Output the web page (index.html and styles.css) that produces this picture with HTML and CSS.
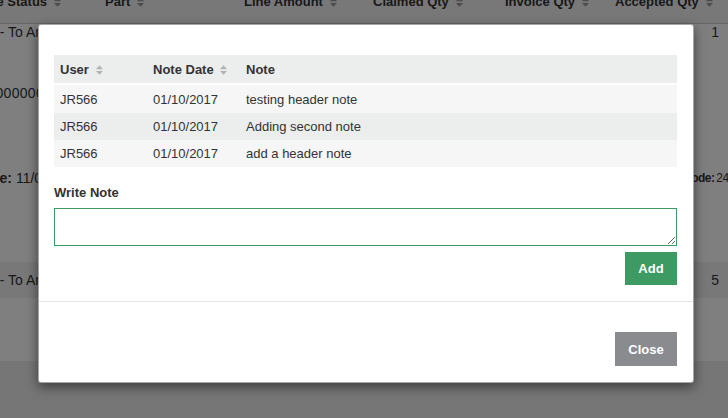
FILE: index.html
```html
<!DOCTYPE html>
<html>
<head>
<meta charset="utf-8">
<link rel="stylesheet" href="styles.css">
</head>
<body>
<div class="page">
  <div class="grid-head">
    <div class="hc c1">Line Status <svg class="sort" viewBox="0 0 8 11"><path d="M4 0L8 4.5H0z M0 6.5H8L4 11z"/></svg></div>
    <div class="hc c2">Part <svg class="sort" viewBox="0 0 8 11"><path d="M4 0L8 4.5H0z M0 6.5H8L4 11z"/></svg></div>
    <div class="hc c3">Line Amount <svg class="sort" viewBox="0 0 8 11"><path d="M4 0L8 4.5H0z M0 6.5H8L4 11z"/></svg></div>
    <div class="hc c4">Claimed Qty <svg class="sort" viewBox="0 0 8 11"><path d="M4 0L8 4.5H0z M0 6.5H8L4 11z"/></svg></div>
    <div class="hc c5">Invoice Qty <svg class="sort" viewBox="0 0 8 11"><path d="M4 0L8 4.5H0z M0 6.5H8L4 11z"/></svg></div>
    <div class="hc c6">Accepted Qty <svg class="sort" viewBox="0 0 8 11"><path d="M4 0L8 4.5H0z M0 6.5H8L4 11z"/></svg></div>
  </div>
  <div class="grow r1">
    <div class="left">1 - To Arrive</div>
    <div class="right">1</div>
  </div>
  <div class="detail">
    <div class="d-row d1"><span class="num">1000000000000</span></div>
    <div class="d-row d2"><span class="left"><b>Date:</b> 11/05/2017</span><span class="right-det"><b>Code:</b> 24</span></div>
  </div>
  <div class="grow r2 striped">
    <div class="left">1 - To Arrive</div>
    <div class="right">5</div>
  </div>
</div>
<div class="backdrop"></div>
<div class="modal">
  <div class="modal-header"></div>
  <div class="modal-body">
    <table class="notes">
      <thead>
        <tr>
          <th class="w1">User <svg class="sort lite" viewBox="0 0 8 11"><path d="M4 0L8 4.5H0z M0 6.5H8L4 11z"/></svg></th>
          <th class="w2">Note Date <svg class="sort lite" viewBox="0 0 8 11"><path d="M4 0L8 4.5H0z M0 6.5H8L4 11z"/></svg></th>
          <th>Note</th>
        </tr>
      </thead>
      <tbody>
        <tr class="first"><td>JR566</td><td>01/10/2017</td><td>testing header note</td></tr>
        <tr><td>JR566</td><td>01/10/2017</td><td>Adding second note</td></tr>
        <tr><td>JR566</td><td>01/10/2017</td><td>add a header note</td></tr>
      </tbody>
    </table>
    <label class="lbl">Write Note</label>
    <textarea class="note-input"></textarea>
    <div class="actions">
      <button class="btn btn-add">Add</button>
    </div>
  </div>
  <div class="modal-footer">
    <button class="btn btn-close">Close</button>
  </div>
</div>
</body>
</html>
```
FILE: styles.css
```css
html, body {
  margin: 0;
  padding: 0;
}
body {
  width: 728px;
  height: 418px;
  overflow: hidden;
  background: #ececec;
  font-family: "Liberation Sans", Arial, sans-serif;
  font-size: 13px;
  color: #333;
  position: relative;
}
.page {
  background: #fff;
  height: 361px;
  margin-left: -23px;
  width: 760px;
  overflow: hidden;
}
.grid-head {
  display: flex;
  height: 23px;
  border-bottom: 1px solid #ccc;
  background: #f0f0f0;
  font-weight: bold;
  color: #333;
  font-size: 13px;
  line-height: 16px;
  align-items: flex-start;
}
.hc {
  display: flex;
  align-items: center;
  gap: 7px;
  margin-top: -6px;
}
.c1 { width: 128px; }
.c2 { width: 139px; }
.c3 { width: 129px; }
.c4 { width: 132px; }
.c5 { width: 110px; }
.c6 { width: 120px; }
.sort {
  width: 7px;
  height: 10px;
  fill: #999;
  flex: none;
}
.grow {
  display: flex;
  justify-content: space-between;
  align-items: center;
  font-size: 14px;
  color: #333;
  padding-right: 18px;
}
.r1 {
  height: 16px;
}
.grow .left { padding-left: 11px; }
.detail {
  height: 222px;
}
.d-row {
  display: flex;
  font-size: 14px;
  white-space: nowrap;
}
.d1 { padding-top: 45px; }
.d1 .num { margin-left: -30px; letter-spacing: 0.3px; }
.d2 {
  padding-top: 69px;
  display: grid;
  grid-template-columns: 706px 60px;
}
.right-det {
  font-size: 12px;
  letter-spacing: -0.5px;
  word-spacing: -1px;
  padding-top: 1px;
}
.backdrop {
  position: absolute;
  inset: 0;
  background: rgba(0, 0, 0, 0.5);
}
.striped {
  background: #f0f0f0;
  height: 36px;
}
.modal {
  position: absolute;
  left: 38px;
  top: 24px;
  width: 654px;
  height: 357px;
  background: #fff;
  border: 1px solid rgba(0, 0, 0, 0.35);
  border-radius: 3px;
  box-shadow: 0 4px 12px rgba(0, 0, 0, 0.5);
  display: flex;
  flex-direction: column;
}
.modal-header {
  height: 14px;
}
.modal-body {
  padding: 16px 16px 16px 15px;
  display: flex;
  flex-direction: column;
  border-bottom: 1px solid #e5e5e5;
}
.notes {
  width: 623px;
  border-collapse: collapse;
}
.notes th {
  background: #eceeed;
  text-align: left;
  font-weight: bold;
  height: 28px;
  padding: 0 6px;
  border-bottom: 2px solid #fff;
  color: #333;
}
.notes td {
  height: 27px;
  padding: 0 6px;
  color: #333;
}
.notes tr.first td { height: 28px; }
.notes tbody tr:nth-child(odd) td { background: #f6f6f6; }
.notes tbody tr:nth-child(even) td { background: #eceeed; }
.w1 { width: 81px; }
.w2 { width: 81px; }
.sort.lite {
  fill: #b3b3b3;
  margin-left: 3px;
  vertical-align: -1px;
}
.lbl {
  font-weight: bold;
  margin-top: 18px;
  line-height: 15px;
  color: #333;
}
.note-input {
  margin-top: 8px;
  width: 623px;
  height: 38px;
  box-sizing: border-box;
  border: 1px solid #3d9a62;
  border-radius: 0;
  padding: 4px;
  font-family: inherit;
  resize: vertical;
  outline: none;
}
.actions {
  display: flex;
  justify-content: flex-end;
  margin-top: 6px;
  width: 623px;
}
.btn {
  border: none;
  border-radius: 0;
  color: #fff;
  font-family: "Liberation Sans", Arial, sans-serif;
  font-weight: bold;
  font-size: 13px;
  cursor: pointer;
}
.btn-add {
  width: 52px;
  height: 33px;
  background: #3d9a62;
}
.modal-footer {
  display: flex;
  justify-content: flex-end;
  padding: 30px 16px 16px;
}
.btn-close {
  width: 62px;
  height: 34px;
  background: #8a8b8f;
}
```
